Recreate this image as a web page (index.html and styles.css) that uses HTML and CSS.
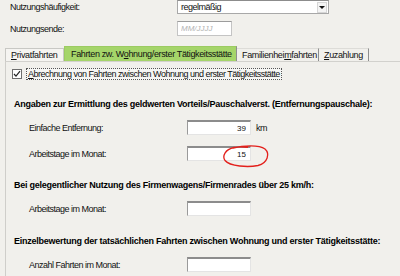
FILE: index.html
```html
<!DOCTYPE html>
<html lang="de">

<head>
    <meta charset="UTF-8">
    <title>Fahrten Wohnung / Tätigkeitsstätte</title>
    <link rel="stylesheet" href="styles.css">
</head>

<body>
    <div class="top">
        <div class="row row-usage">
            <label class="top-label">Nutzungshäufigkeit:</label>
            <div class="select">
                <span class="select-text">regelmäßig</span>
                <span class="select-btn"><span class="tri"></span></span>
            </div>
        </div>
        <div class="row row-end">
            <label class="top-label">Nutzungsende:</label>
            <input class="date" type="text" placeholder="MM/JJJJ">
        </div>
    </div>

    <div class="tabs">
        <div class="tab tab-first"><u>P</u>rivatfahrten</div>
        <div class="tab tab-active">Fahrten zw. W<u>o</u>hnung/erster Tätigkeitsstätte</div>
        <div class="tab tab-home">Familienhei<u>m</u>fahrten</div>
        <div class="tab tab-last"><u>Z</u>uzahlung</div>
    </div>

    <div class="panel">
        <div class="check-row">
            <span class="checkbox">
                <svg width="8" height="8" viewBox="0 0 8 8"><path d="M1 4 L3 6.2 L7 1.2" fill="none" stroke="#222" stroke-width="1.2"/></svg>
            </span>
            <span class="check-label"><u>A</u>brechnung von Fahrten zwischen Wohnung und erster Tätigkeitsstätte</span>
        </div>

        <h3 class="heading">Angaben zur Ermittlung des geldwerten Vorteils/Pauschalverst. (Entfernungspauschale):</h3>
        <div class="field-row">
            <label class="field-label">Einfache Entfernung:</label>
            <input class="num" type="text" value="39">
            <span class="unit">km</span>
        </div>
        <div class="field-row field-row-next">
            <label class="field-label">Arbeitstage im Monat:</label>
            <span class="mark-wrap">
                <input class="num" type="text" value="15">
                <svg class="mark" width="50" height="26" viewBox="0 0 50 26">
                    <path d="M12 4 C22 1.5 38 0.5 44 5 C49 9.5 47 19 37 21.5 C27 23.5 9 22.5 4 16.5 C1 12 4 5.5 13 3.5 C18 2.5 23 2.8 27 3.4" fill="none" stroke="#e3201c" stroke-width="1.3"/>
                </svg>
            </span>
        </div>

        <h3 class="heading">Bei gelegentlicher Nutzung des Firmenwagens/Firmenrades über 25 km/h:</h3>
        <div class="field-row">
            <label class="field-label">Arbeitstage im Monat:</label>
            <input class="num" type="text" value="">
        </div>

        <h3 class="heading heading-last">Einzelbewertung der tatsächlichen Fahrten zwischen Wohnung und erster Tätigkeitsstätte:</h3>
        <div class="field-row">
            <label class="field-label">Anzahl Fahrten im Monat:</label>
            <input class="num" type="text" value="">
        </div>
    </div>
</body>

</html>
```

FILE: styles.css
```css
body {
    margin: 0;
    padding: 0;
    background-color: #f1f0ec;
    color: #111;
    font-family: 'Liberation Sans', Arial, sans-serif;
    font-size: 9px;
    letter-spacing: -0.5px;
    overflow: hidden;
}

u {
    text-decoration: underline;
    text-underline-offset: 1px;
}

/* top rows */
.top {
    padding-left: 10px;
}

.row {
    display: flex;
    align-items: center;
}

.row-usage {
    height: 14px;
}

.row-end {
    height: 15px;
    margin-top: 7px;
}

.top-label {
    width: 167px;
}

.select {
    box-sizing: border-box;
    width: 152px;
    height: 14px;
    display: flex;
    align-items: center;
    background-color: #fff;
    border: 1px solid #a8a8a8;
    border-top-color: #8c8c8c;
}

.select-text {
    flex: 1;
    padding-left: 3px;
}

.select-btn {
    box-sizing: border-box;
    width: 10px;
    height: 11px;
    margin-right: 1px;
    display: flex;
    align-items: center;
    justify-content: center;
    background-color: #f4f4f4;
    border: 1px solid #d6d6d6;
}

.tri {
    width: 0;
    height: 0;
    border-left: 3px solid transparent;
    border-right: 3px solid transparent;
    border-top: 3px solid #111;
}

.date {
    box-sizing: border-box;
    width: 55px;
    height: 15px;
    padding: 0 3px;
    font-family: 'Liberation Sans', Arial, sans-serif;
    font-size: 8px;
    background-color: #fff;
    border: 1px solid #c4c4c4;
    border-top-color: #9c9c9c;
    outline: none;
}

.date::placeholder {
    color: #b4b4b4;
    font-style: italic;
}

/* tabs */
.tabs {
    display: flex;
    align-items: flex-end;
    height: 15px;
    margin-top: 10px;
    padding-left: 5px;
}

.tab {
    box-sizing: border-box;
    height: 13px;
    line-height: 12px;
    padding: 0 5px;
    white-space: nowrap;
    letter-spacing: -0.35px;
    border-top: 1px solid #dddcd8;
    border-right: 1px solid #8e8e8e;
}

.tab-first {
    width: 59px;
    border: 1px solid #c8c8c4;
    border-bottom: none;
    background-color: #f5f4f1;
}

.tab-active {
    width: 173px;
    height: 15px;
    line-height: 14px;
    padding-left: 6px;
    background-color: #a5d56a;
    border: 1px solid #9ccb62;
    border-right-color: #8e8e8e;
    border-bottom: none;
}

.tab-home {
    width: 82px;
}

.tab-last {
    width: 50px;
}

/* panel */
.panel {
    min-height: 220px;
    margin-left: 5px;
    padding-top: 6px;
    border-top: 1px solid #d2d1cd;
    border-left: 1px solid #cfceca;
}

.check-row {
    height: 12px;
    display: flex;
    align-items: center;
}

.checkbox {
    box-sizing: border-box;
    width: 10px;
    height: 10px;
    margin-left: 6px;
    display: flex;
    align-items: center;
    justify-content: center;
    background-color: #fff;
    border: 1px solid #6e6e6e;
}

.check-label {
    margin-left: 4px;
    padding: 0 1px;
    line-height: 10px;
    border: 1px dotted #555;
    background-color: #f6f6f4;
}

.heading {
    height: 12px;
    margin: 18px 0 10px 8px;
    font-size: 9px;
    line-height: 12px;
    font-weight: bold;
    letter-spacing: -0.25px;
    color: #000;
}

.heading-last {
    margin-top: 19px;
}

.field-row {
    height: 15px;
    display: flex;
    align-items: center;
    padding-left: 23px;
}

.field-row-next {
    margin-top: 11px;
}

.field-label {
    width: 158px;
}

.num {
    box-sizing: border-box;
    width: 64px;
    height: 15px;
    padding: 0 4px;
    text-align: right;
    font-family: 'Liberation Sans', Arial, sans-serif;
    font-size: 8px;
    color: #111;
    background-color: #fff;
    border: 1px solid #e4e4e4;
    border-top: 2px solid #8c8c8c;
    border-left-color: #9a9a9a;
    outline: none;
}

.unit {
    margin-left: 5px;
}

.mark-wrap {
    position: relative;
    display: flex;
}

.mark {
    position: absolute;
    left: 34px;
    top: -2px;
}
```
